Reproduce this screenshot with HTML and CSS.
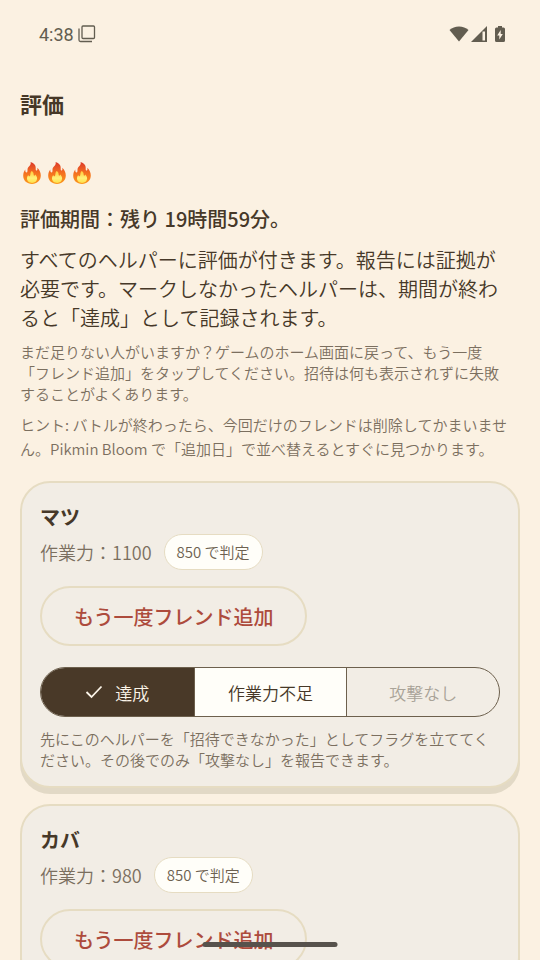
FILE: index.html
```html
<!DOCTYPE html>
<html lang="ja">
<head>
    <meta charset="UTF-8">
    <meta name="viewport" content="width=device-width, initial-scale=1">
    <title>評価</title>
    <link rel="stylesheet" href="styles.css">
</head>
<body>
<svg class="defs" aria-hidden="true">
    <defs>
        <linearGradient id="flameOuter" x1="0" y1="0" x2="0" y2="1">
            <stop offset="0" stop-color="#dc3a2c"/>
            <stop offset="0.5" stop-color="#f4701f"/>
            <stop offset="1" stop-color="#fb9a1e"/>
        </linearGradient>
        <linearGradient id="flameInner" x1="0" y1="0" x2="0" y2="1">
            <stop offset="0" stop-color="#ffc83a"/>
            <stop offset="0.6" stop-color="#fff27a"/>
            <stop offset="1" stop-color="#ffdf4a"/>
        </linearGradient>
        <symbol id="flame" viewBox="0 0 18 22">
            <path fill="url(#flameOuter)" d="M7.6 0C11 .8 13 3.6 12.7 6.4c-.1 1.2.2 2.2.9 2.2.9 0 1-1.2.6-2.8 2.2 1.8 3.6 4.7 3.6 7.8 0 4.9-3.8 8.4-8.8 8.4S.2 18.6.2 13.8c0-2.8 1-5 2.1-6.3-.1 1.7.3 3 1.2 3 1.1 0 1-1.5 1-3C4.5 4.4 8.6 3.7 7.600 0z"/>
            <path fill="url(#flameInner)" d="M8.8 9c2 1 1.6 3 2 4.2.3.9 1.2.6 1.3-.6 1.5 1.2 2 2.5 2 4 0 2.7-2.200 4.300-5 4.300s-5.100-1.700-5.100-4.300c0-1.500.5-2.800 1.400-3.600.1 1.200.9 1.600 1.500.9.9-1-.1-3.400 1.900-4.900z"/>
        </symbol>
    </defs>
</svg>
<div class="screen">
    <header class="status-bar">
        <div class="status-left">
            <span>4:38</span>
            <svg width="18" height="18" viewBox="0 0 18 18" fill="none" stroke="currentColor">
                <rect x="4" y="1" width="12.5" height="12.5" rx="1" stroke-width="1.3"/>
                <path d="M1 3.5V15a1.5 1.5 0 0 0 1.5 1.5H14" stroke-width="1.3"/>
            </svg>
        </div>
        <div class="status-right">
            <svg width="20" height="16" viewBox="0 0 20 16" fill="currentColor">
                <path d="M10 15.5.5 4C3 1.6 6.3.4 10 .4S17 1.6 19.5 4z"/>
            </svg>
            <svg width="16" height="16" viewBox="0 0 16 16" fill="currentColor">
                <path fill-rule="evenodd" d="M0 16 16 0v16zM11.5 5.500v9H14v-9z"/>
            </svg>
            <svg class="battery" width="10" height="16" viewBox="0 0 10 16" fill="currentColor">
                <path fill-rule="evenodd" d="M3 0h4v1.5h1.5A1.5 1.5 0 0 1 10 3v11.5a1.5 1.5 0 0 1-1.5 1.5h-7A1.5 1.5 0 0 1 0 14.5V3a1.5 1.5 0 0 1 1.5-1.5H3zM5.7 4 2.2 9.5h2.100v4L7.800 8H5.700z"/>
            </svg>
        </div>
    </header>

    <h1 class="title">評価</h1>

    <main class="content">
        <div class="flames" role="img" aria-label="3">
            <svg width="18" height="22"><use href="#flame"/></svg>
            <svg width="18" height="22"><use href="#flame"/></svg>
            <svg width="18" height="22"><use href="#flame"/></svg>
        </div>
        <section class="intro">
            <h2 class="period">評価期間：残り 19時間59分。</h2>
            <p class="lead">すべてのヘルパーに評価が付きます。報告には証拠が必要です。マークしなかったヘルパーは、期間が終わると「達成」として記録されます。</p>
            <p class="note">まだ足りない人がいますか？ゲームのホーム画面に戻って、もう一度「フレンド追加」をタップしてください。招待は何も表示されずに失敗することがよくあります。</p>
            <p class="hint">ヒント: バトルが終わったら、今回だけのフレンドは削除してかまいません。Pikmin Bloom で「追加日」で並べ替えるとすぐに見つかります。</p>
        </section>

        <article class="card">
            <h3 class="name">マツ</h3>
            <div class="meta">
                <span class="power">作業力：1100</span>
                <span class="badge">850 で判定</span>
            </div>
            <button type="button" class="add-button">もう一度フレンド追加</button>
            <div class="segments" role="radiogroup" aria-label="評価">
                <label class="segment">
                    <input type="radio" name="rating1" checked>
                    <svg width="18" height="14" viewBox="0 0 18 14" fill="none" stroke="currentColor" stroke-width="1.8">
                        <path d="M1.5 7 6.5 12 16.5 1.5"/>
                    </svg>
                    <span>達成</span>
                </label>
                <label class="segment">
                    <input type="radio" name="rating1">
                    <span>作業力不足</span>
                </label>
                <label class="segment">
                    <input type="radio" name="rating1" disabled>
                    <span>攻撃なし</span>
                </label>
            </div>
            <p class="note">先にこのヘルパーを「招待できなかった」としてフラグを立ててください。その後でのみ「攻撃なし」を報告できます。</p>
        </article>

        <article class="card">
            <h3 class="name">カバ</h3>
            <div class="meta">
                <span class="power">作業力：980</span>
                <span class="badge">850 で判定</span>
            </div>
            <button type="button" class="add-button">もう一度フレンド追加</button>
        </article>
    </main>
    <div class="home-bar"></div>
</div>
</body>
</html>
```
FILE: styles.css
```css
* {
    box-sizing: border-box;
}

body {
    margin: 0;
    background: #fbf1e2;
    color: #463828;
    font-family: "Noto Sans CJK JP", sans-serif;
    font-weight: 350;
}

h1, h2, h3, p {
    margin: 0;
}

.defs {
    position: absolute;
    width: 0;
    height: 0;
}

.screen {
    position: relative;
    height: 100vh;
    overflow: hidden;
}

.status-bar {
    display: flex;
    justify-content: space-between;
    align-items: center;
    height: 68px;
    padding: 0 35px 0 39px;
    color: #625d50;
    font-family: Roboto, sans-serif;
    font-size: 18px;
    font-weight: 400;
}

.status-left,
.status-right {
    display: flex;
    align-items: center;
}

.status-left {
    gap: 4px;
}

.status-right {
    gap: 2px;
}

.battery {
    margin-left: 6px;
}

.title {
    padding: 0 20px;
    font-size: 22px;
    font-weight: 700;
    line-height: 70px;
}

.content {
    padding: 0 20px;
}

.flames {
    display: flex;
    gap: 7px;
    padding: 24px 3px 20px;
}

.intro {
    padding-right: 8px;
    margin-bottom: 20px;
}

.period {
    font-size: 20px;
    font-weight: 500;
    line-height: 30px;
    margin-bottom: 11px;
}

.lead {
    font-size: 20px;
    line-height: 29px;
    margin-bottom: 9px;
}

.note,
.hint {
    color: #7b6f5f;
    font-size: 15px;
    line-height: 21px;
}

.hint {
    line-height: 24px;
    margin-top: 9px;
}

.card {
    margin-bottom: 16px;
    padding: 19px 18px 16px;
    border: 2px solid #e6dcc2;
    border-radius: 30px;
    background: #f2ede5;
    box-shadow: 0 6px 0 #e2d9c6;
}

.name {
    font-size: 20px;
    font-weight: 700;
    line-height: 30px;
    margin-bottom: 2px;
}

.meta {
    display: flex;
    align-items: center;
    gap: 12px;
    margin-bottom: 16px;
    color: #7b6f5f;
}

.power {
    font-size: 18px;
}

.badge {
    padding: 0 12px;
    border: 1px solid #e6dcc2;
    border-radius: 18px;
    background: #fffef9;
    color: #6d6150;
    font-size: 15px;
    line-height: 34px;
}

.add-button {
    display: block;
    height: 60px;
    padding: 0 32px;
    border: 2px solid #e6dcc2;
    border-radius: 30px;
    background: transparent;
    color: #ad4b3c;
    font-family: inherit;
    font-size: 20px;
    font-weight: 500;
}

.segments {
    display: grid;
    grid-template-columns: repeat(3, 1fr);
    height: 50px;
    margin: 21px 0 11px;
    border: 1px solid #6d604d;
    border-radius: 25px;
    overflow: hidden;
}

.segment {
    display: flex;
    justify-content: center;
    align-items: center;
    gap: 12px;
    background: #fffef9;
    font-size: 17px;
}

.segment + .segment {
    border-left: 1px solid #6d604d;
}

.segment input {
    position: absolute;
    opacity: 0;
}

.segment:has(input:checked) {
    background: #493928;
    color: #fbf4e8;
}

.segment:has(input:disabled) {
    background: transparent;
    color: #a9a398;
}

.home-bar {
    position: absolute;
    bottom: 13px;
    left: 50%;
    width: 25%;
    height: 5px;
    border-radius: 3px;
    background: #57524c;
    transform: translateX(-50%);
}
```
